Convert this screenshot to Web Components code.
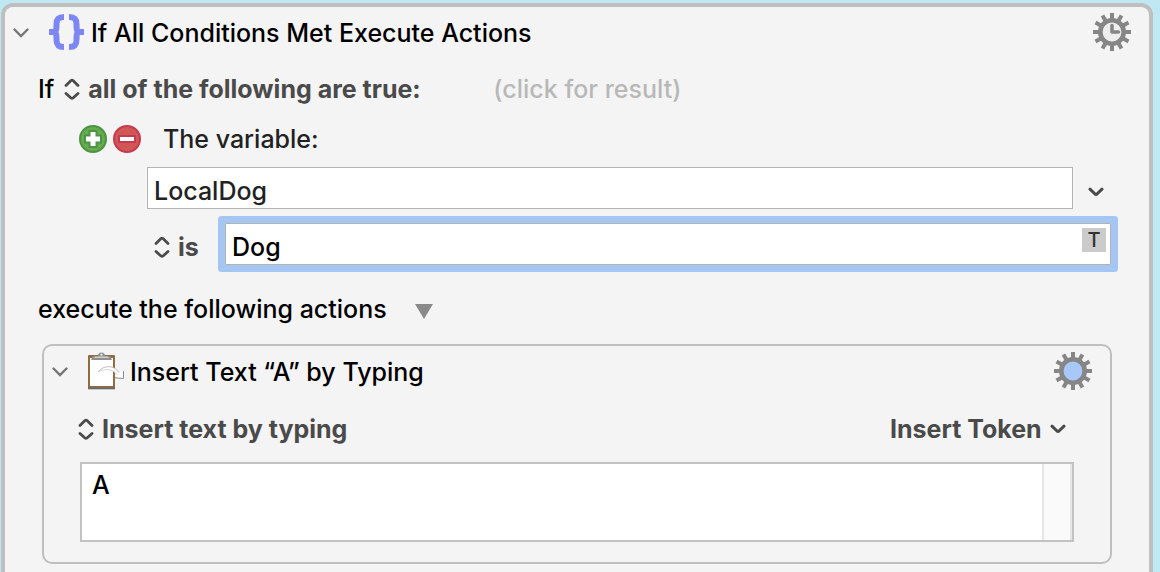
<!DOCTYPE html>
<html lang="en">
<head>
<meta charset="utf-8">
<title>If All Conditions Met Execute Actions</title>
<style>
  * {
    box-sizing: border-box;
  }
  body {
    margin: 0;
    min-height: 100vh;
    display: flex;
    flex-direction: column;
    padding: 3px 7px 0 1px;
    background: #bfe8f2;
    color: #000;
    font: 500 25px/32px Inter, "Liberation Sans", sans-serif;
  }
  .root-action {
    flex: 1;
    --card-border: 4px;
    --card-radius: 12px;
  }
  .root-action::part(card) {
    border-bottom: 0;
    border-bottom-left-radius: 0;
    border-bottom-right-radius: 0;
  }
  .nested {
    margin: 19px 37px 8px;
    --card-border: 2px;
    --card-radius: 10px;
  }
</style>
</head>
<body>
  <action-card class="root-action" heading="If All Conditions Met Execute Actions">
    <braces-icon slot="icon"></braces-icon>
    <gear-button slot="gear" kind="clock"></gear-button>
    <condition-editor></condition-editor>
    <action-card class="nested" heading="Insert Text “A” by Typing">
      <clipboard-icon slot="icon"></clipboard-icon>
      <gear-button slot="gear" kind="plain"></gear-button>
      <insert-text></insert-text>
    </action-card>
  </action-card>

<script>
const reset = `
  * {
    box-sizing: border-box;
  }
  button, input, select, textarea {
    margin: 0;
    padding: 0;
    border: 0;
    border-radius: 0;
    outline: 0;
    background: none;
    color: inherit;
    font: inherit;
  }
  svg {
    display: block;
    flex: none;
  }
`;

const chevron = `
  <svg width="16" height="10" viewBox="0 0 16 10" fill="none" stroke="currentColor" stroke-width="3" stroke-linecap="round" stroke-linejoin="round">
    <path d="M2 2.2 L7 7 Q8 7.8 9 7 L14 2.2"/>
  </svg>
`;

function define(name, html, setup) {
  const template = document.createElement("template");
  template.innerHTML = html;
  window.customElements.define(name, class extends HTMLElement {
    constructor() {
      super();
      this.attachShadow({ mode: "open" });
      this.shadowRoot.appendChild(template.content.cloneNode(true));
    }

    connectedCallback() {
      if (setup) {
        setup(this, this.shadowRoot);
      }
    }
  });
}

define("braces-icon", `
  <style>
    :host { display: block; }
    svg { display: block; }
  </style>
  <svg width="36" height="38" viewBox="0 0 36 38" fill="none" stroke="#7d87f3" stroke-width="6">
    <path d="M15 4 C9 4 7.5 7 7.5 11 C7.5 15.5 7.5 19 4.5 19 C7.5 19 7.5 22.5 7.5 27 C7.5 31 9 34 15 34"/>
    <path d="M20 4 C26 4 27.5 7 27.5 11 C27.5 15.5 27.5 19 30.5 19 C27.5 19 27.5 22.5 27.5 27 C27.5 31 26 34 20 34"/>
    <path d="M0 19 H7 M28 19 H35"/>
  </svg>
`);

define("clipboard-icon", `
  <style>
    :host { display: block; }
    svg { display: block; }
  </style>
  <svg width="36" height="38" viewBox="0 0 36 38">
    <rect x="0" y="3" width="27" height="34" rx="1" fill="#8f6c42"/>
    <rect x="0" y="35.5" width="27" height="1.8" fill="#68686a"/>
    <rect x="2" y="6" width="23" height="28" fill="#fff"/>
    <path d="M3 8 L5 4 H10 Q10 0.5 13.5 0.5 Q17 0.5 17 4 H22 L24 8 Z" fill="#8f8f8f"/>
    <path d="M7 4.5 H20 L21 6 H6 Z" fill="#cfcfcf"/>
    <circle cx="13.5" cy="2.7" r="1.1" fill="#eee"/>
    <path d="M10 20 C16 12.5 26 13 31 20.500 L35.500 18.500 V26.500 L27 25.500 L29 22.500 C24 16 17 16 10 20 Z" fill="#fff"/>
    <path d="M10 20 C16 12.5 26 13 31 20.500" fill="none" stroke="#b0b0b0" stroke-width="0.8"/>
    <path d="M29 22.500 C24 16.500 17 16.500 10 20" fill="none" stroke="#ccc" stroke-width="0.8"/>
    <path d="M27 25.800 L35.500 26.500 V19" fill="none" stroke="#8a8a8a" stroke-width="1"/>
  </svg>
`);

define("gear-button", `
  <style>
    ${reset}
    :host { display: block; }
    button { display: block; }
  </style>
  <button type="button" aria-label="Action options">
    <svg width="38" height="38" viewBox="-19 -19 38 38"></svg>
  </button>
`, (host, root) => {
  const clock = host.getAttribute("kind") === "clock";
  let teeth = "";
  for (let i = 0; i < 12; i++) {
    teeth += `<rect x="-2" y="-19" width="4" height="8" fill="#868686" transform="rotate(${i * 30})"/>`;
  }
  root.querySelector("svg").innerHTML = `
    ${teeth}
    <circle r="11.7" fill="${clock ? "#eee" : "#a9c8fa"}" stroke="#868686" stroke-width="4.6"/>
    ${clock ? `<path d="M0 -6.500 V0 H6.500" fill="none" stroke="#868686" stroke-width="3.6" stroke-linecap="round" stroke-linejoin="round"/>` : ""}
  `;
});

define("action-card", `
  <style>
    ${reset}
    :host {
      display: flex;
      flex-direction: column;
    }
    section {
      flex: 1;
      border: var(--card-border) solid #bfbfbf;
      border-radius: var(--card-radius);
      background: #f4f4f4;
    }
    header {
      display: flex;
      align-items: center;
      height: 40px;
      margin: 5px 18px 0 8px;
    }
    .toggle {
      display: flex;
      align-items: center;
      height: 32px;
      margin-right: 20px;
      padding-top: 2px;
      color: #757575;
    }
    h2 {
      flex: 1;
      margin: 0;
      padding: 2px 0 0 6px;
      font: inherit;
    }
  </style>
  <section part="card">
    <header>
      <button class="toggle" type="button" aria-label="Collapse">
        <svg width="16" height="10" viewBox="0 0 16 10" fill="none" stroke="currentColor" stroke-width="2.4" stroke-linecap="round">
          <path d="M1.5 1.5 L8 8 L14.5 1.5"/>
        </svg>
      </button>
      <slot name="icon"></slot>
      <h2></h2>
      <slot name="gear"></slot>
    </header>
    <slot></slot>
  </section>
`, (host, root) => {
  root.querySelector("h2").textContent = host.getAttribute("heading");
});

// popup menu drawn as bold text behind an up/down arrow
define("popup-select", `
  <style>
    ${reset}
    :host {
      display: inline-flex;
      align-items: center;
      gap: 8px;
      color: #4a4a4a;
      font-weight: 700;
    }
    select {
      appearance: none;
      height: 32px;
    }
    .pulldown { display: none; }
    :host([pulldown]) .updown { display: none; }
    :host([pulldown]) .pulldown { display: block; }
  </style>
  <svg class="updown" width="16" height="22" viewBox="0 0 16 22" fill="none" stroke="currentColor" stroke-width="2.8" stroke-linecap="round" stroke-linejoin="round">
    <path d="M2 7.5 L7 2.5 Q8 1.7 9 2.5 L14 7.5"/>
    <path d="M2 15.5 L7 20 Q8 20.8 9 20 L14 15.5"/>
  </svg>
  <select><option></option></select>
  <span class="pulldown">${chevron}</span>
`, (host, root) => {
  root.querySelector("option").textContent = host.getAttribute("value");
  root.querySelector("select").setAttribute("aria-label", host.getAttribute("label"));
});

define("condition-editor", `
  <style>
    ${reset}
    :host { display: block; }
    .row {
      display: flex;
      align-items: center;
    }
    .match {
      margin: 21px 33px 0;
      gap: 10px;
    }
    .result {
      margin-left: 62px;
      color: #b8b8b8;
    }
    .variable {
      margin: 18px 74px 0;
      gap: 6px;
    }
    .variable button { height: 28px; }
    .variable label {
      margin-left: 16px;
      color: #222;
    }
    .name {
      margin: 12px 45px 0 142px;
      gap: 15px;
      color: #222;
    }
    .name button {
      padding-top: 8px;
      color: #4a4a4a;
    }
    .field {
      flex: 1;
      display: flex;
      min-width: 0;
      height: 42px;
      border: 1px solid #b3b3b3;
      background: #fff;
    }
    .field input {
      flex: 1;
      min-width: 0;
      padding: 6px 6px 0;
    }
    .compare {
      margin: 14px 38px 0 149px;
      gap: 26px;
    }
    .compare popup-select { padding-top: 6px; }
    .focused {
      border-radius: 1px;
      box-shadow: 0 0 0 7px #a5c6f3;
      color: #000;
    }
    .token {
      width: 24px;
      height: 24px;
      margin: 4px;
      background: #cbcbcb;
      color: #333;
      font-size: 20px;
      line-height: 24px;
    }
    .execute {
      margin: 28px 33px 0;
      gap: 28px;
    }
    .execute svg {
      height: 19px;
      padding-top: 4px;
    }
  </style>
  <div class="row match">
    <span>If</span>
    <popup-select label="Match" value="all of the following are true:"></popup-select>
    <button class="result" type="button">(click for result)</button>
  </div>
  <div class="row variable">
    <button type="button" aria-label="Add condition">
      <svg width="28" height="28" viewBox="0 0 28 28">
        <circle cx="14" cy="14" r="13" fill="#67ab4d" stroke="#4b9444" stroke-width="2"/>
        <path d="M14 5 V23 M5 14 H23" stroke="#4b9444" stroke-width="9"/>
        <path d="M14 7 V21 M7 14 H21" stroke="#fff" stroke-width="5"/>
      </svg>
    </button>
    <button type="button" aria-label="Remove condition">
      <svg width="28" height="28" viewBox="0 0 28 28">
        <circle cx="14" cy="14" r="13" fill="#d15756" stroke="#c43b50" stroke-width="2"/>
        <rect x="5" y="10" width="18" height="8" fill="#c43b50"/>
        <rect x="7" y="12" width="14" height="4" fill="#fff"/>
      </svg>
    </button>
    <label for="variable">The variable:</label>
  </div>
  <div class="row name">
    <div class="field"><input id="variable" type="text" value="LocalDog"></div>
    <button type="button" aria-label="Choose variable">${chevron}</button>
  </div>
  <div class="row compare">
    <popup-select label="Comparison" value="is"></popup-select>
    <div class="field focused">
      <input type="text" aria-label="Value" value="Dog">
      <button class="token" type="button">T</button>
    </div>
  </div>
  <div class="row execute">
    <span>execute the following actions</span>
    <svg width="18" height="15" viewBox="0 0 18 15"><path d="M0 0 H18 L9 15 Z" fill="#8a8a8a"/></svg>
  </div>
`);

define("insert-text", `
  <style>
    ${reset}
    :host { display: block; }
    .bar {
      display: flex;
      justify-content: space-between;
      margin: 22px 44px 0 34px;
    }
    .box {
      display: flex;
      height: 80px;
      margin: 17px 36px 20px;
      border: 2px solid #c2c2c2;
      background: #fff;
    }
    textarea {
      flex: 1;
      min-width: 0;
      padding: 5px 10px;
      resize: none;
      overflow: hidden;
    }
    .gutter {
      width: 30px;
      border: solid #e6e6e6;
      border-width: 0 2px;
      background: #fafafa;
    }
  </style>
  <div class="bar">
    <popup-select label="Insert mode" value="Insert text by typing"></popup-select>
    <popup-select pulldown label="Insert Token" value="Insert Token"></popup-select>
  </div>
  <div class="box">
    <textarea aria-label="Text to insert">A</textarea>
    <div class="gutter"></div>
  </div>
`);
</script>
</body>
</html>
